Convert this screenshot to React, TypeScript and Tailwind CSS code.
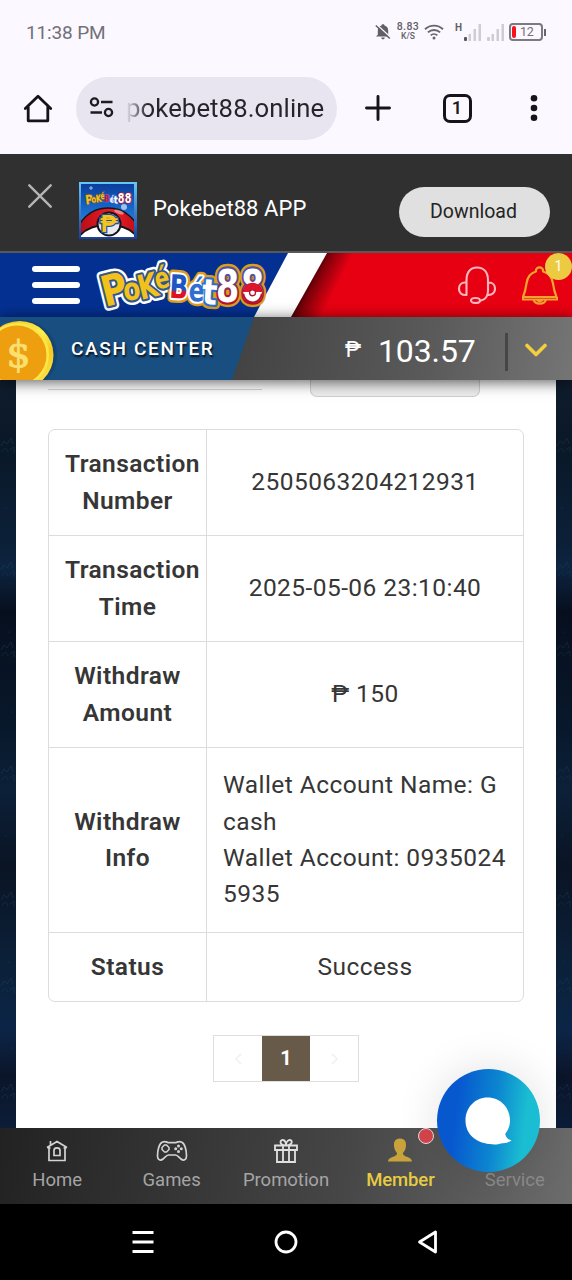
import type { ReactNode } from "react";

type Glyph = {
  ch: string;
  x: number;
  y: number;
  size: number;
  width: number;
  rot: number;
  fill: string;
  edge: string;
  halo: string;
  rim: string;
};

const glyphs: Glyph[] = [
  { ch: "P", x: 314, y: 181, size: 128, width: 78, rot: -14, fill: "#f2c21b", edge: "#35568a", halo: "#35568a", rim: "#ffffff" },
  { ch: "o", x: 372, y: 162, size: 94, width: 52, rot: -6, fill: "#f2c21b", edge: "#35568a", halo: "#35568a", rim: "#ffffff" },
  { ch: "K", x: 422, y: 160, size: 102, width: 60, rot: -14, fill: "#f2c21b", edge: "#35568a", halo: "#35568a", rim: "#ffffff" },
  { ch: "é", x: 470, y: 128, size: 88, width: 44, rot: -12, fill: "#f2c21b", edge: "#35568a", halo: "#35568a", rim: "#ffffff" },
  { ch: "B", x: 507, y: 153, size: 98, width: 56, rot: 3, fill: "url(#bFill)", edge: "#ffffff", halo: "#ffffff", rim: "#dd9d1e" },
  { ch: "é", x: 565, y: 162, size: 94, width: 48, rot: 3, fill: "#2f6fd0", edge: "#ffffff", halo: "#ffffff", rim: "#dd9d1e" },
  { ch: "t", x: 604, y: 171, size: 106, width: 46, rot: 4, fill: "#ffffff", edge: "#2f6fd0", halo: "#2f6fd0", rim: "#dd9d1e" },
  { ch: "8", x: 649, y: 166, size: 134, width: 70, rot: 0, fill: "#ffffff", edge: "url(#eightEdge)", halo: "url(#eightEdge)", rim: "#dd9d1e" },
  { ch: "8", x: 724, y: 166, size: 134, width: 70, rot: 0, fill: "#ffffff", edge: "url(#eightEdge)", halo: "url(#eightEdge)", rim: "#dd9d1e" },
];

function Wordmark({ className }: { className: string }) {
  const layer = (pick: (g: Glyph) => { fill: string; stroke: string; width: number }, key: string) =>
    glyphs.map((g, i) => {
      const p = pick(g);
      return (
        <text
          key={key + i}
          x={g.x}
          y={g.y}
          fontSize={g.size}
          transform={`rotate(${g.rot} ${g.x} ${g.y})`}
          fill={p.fill}
          stroke={p.stroke}
          strokeWidth={p.width}
          strokeLinejoin="round"
          paintOrder="stroke"
          textLength={g.width}
          lengthAdjust="spacingAndGlyphs"
        >
          {g.ch}
        </text>
      );
    });
  return (
    <svg viewBox="288 36 516 160" className={className} fontFamily="'DejaVu Sans Condensed','DejaVu Sans',sans-serif" fontWeight="700" overflow="visible">
      <defs>
        <linearGradient id="bFill" x1="0" y1="0" x2="0" y2="1">
          <stop offset="0.6" stopColor="#1f55c4" />
          <stop offset="0.6" stopColor="#e01222" />
        </linearGradient>
        <linearGradient id="eightEdge" x1="0" y1="0" x2="0" y2="1">
          <stop offset="0.3" stopColor="#54509c" />
          <stop offset="0.7" stopColor="#b3142c" />
        </linearGradient>
      </defs>
      {layer((g) => ({ fill: g.rim, stroke: g.rim, width: 28 }), "r")}
      {layer((g) => ({ fill: g.halo, stroke: g.halo, width: 13 }), "h")}
      {layer((g) => ({ fill: g.fill, stroke: g.edge, width: 7 }), "f")}
      <g>
        <circle cx="759" cy="139" r="28" fill="#fff" stroke="#b3142c" strokeWidth="6" />
        <path d="M731 137a28 28 0 0 1 56 0z" fill="#e0142b" />
        <path d="M731 138h56" stroke="#fff" strokeWidth="5" />
        <circle cx="759" cy="138" r="9" fill="#fff" stroke="#b3142c" strokeWidth="4" />
      </g>
    </svg>
  );
}

function AppIcon() {
  return (
    <svg viewBox="0 0 58 57" className="h-[57px] w-[58px] shrink-0">
      <defs>
        <linearGradient id="appSky" x1="0" y1="0" x2="0" y2="1">
          <stop offset="0" stopColor="#0b3a98" />
          <stop offset="0.4" stopColor="#1460c4" />
          <stop offset="1" stopColor="#3aa0ea" />
        </linearGradient>
        <linearGradient id="appFrame" x1="0" y1="0" x2="0" y2="1">
          <stop offset="0" stopColor="#66c8f4" />
          <stop offset="1" stopColor="#173f9e" />
        </linearGradient>
        <linearGradient id="appBall" x1="0" y1="0" x2="1" y2="0">
          <stop offset="0" stopColor="#b40c14" />
          <stop offset="0.6" stopColor="#ee1e26" />
          <stop offset="1" stopColor="#b80c16" />
        </linearGradient>
        <clipPath id="appClip">
          <rect x="2" y="2" width="53" height="53" />
        </clipPath>
      </defs>
      <rect width="58" height="57" fill="url(#appFrame)" />
      <g clipPath="url(#appClip)">
        <rect width="58" height="57" fill="url(#appSky)" />
        <circle cx="45" cy="25" r="3" fill="#fff" opacity="0.6" />
        <path d="M12 4v4M10 6h4" stroke="#b9dcff" strokeWidth="0.8" />
        <ellipse cx="29" cy="54" rx="31" ry="28" fill="url(#appBall)" stroke="#14141c" strokeWidth="1.4" />
        <path d="M-2 58C4 47 14 43 29 43s25 4 31 15z" fill="#fff" stroke="#14141c" strokeWidth="1.8" />
        <circle cx="30" cy="42" r="11.5" fill="#e9e9ef" stroke="#14141c" strokeWidth="2" />
        <ellipse cx="40" cy="30" rx="5" ry="1.8" fill="#fff" opacity="0.45" transform="rotate(20 40 30)" />
        <text x="30" y="50" textAnchor="middle" fontFamily="Roboto,sans-serif" fontWeight="700" fontSize="24" fill="#f5c51d" stroke="#24509c" strokeWidth="2.600" paintOrder="stroke">
          ₱
        </text>
      </g>
      <svg x="5" y="8" width="49" height="16" viewBox="288 36 516 160" preserveAspectRatio="none" overflow="visible" fontFamily="'DejaVu Sans Condensed','DejaVu Sans',sans-serif" fontWeight="700">
        {glyphs.map((g, i) => (
          <text
            key={i}
            x={g.x - 6}
            y={g.y}
            fontSize={g.size}
            textLength={g.width}
            lengthAdjust="spacingAndGlyphs"
            fill={i < 4 ? "#f2c21b" : i === 4 ? "#e01222" : "#ffffff"}
            stroke={i < 4 ? "#6a5a48" : i > 6 ? "#b3142c" : "#2f6fd0"}
            strokeWidth="16"
            paintOrder="stroke"
            transform={`rotate(${g.rot / 2} ${g.x} ${g.y})`}
          >
            {g.ch}
          </text>
        ))}
      </svg>
    </svg>
  );
}

function StatusBar() {
  return (
    <div className="flex h-16 items-center justify-between pl-[26px] pr-[25px] text-[#737078]">
      <span className="text-[19px] leading-none tracking-[-0.150px]">11:38 PM</span>
      <div className="flex items-center">
        <svg viewBox="0 0 16 18" className="h-[18px] w-4" fill="#625f66">
          <path d="M8 1.200c.9 0 1.500.5 1.500 1.300 2.400.6 3.700 2.400 3.700 5v4.300L15 13.500H1l1.800-1.700V7.500c0-2.600 1.300-4.400 3.700-5C6.500 1.700 7.100 1.200 8 1.200zM6.200 14.600h3.600a1.800 1.800 0 0 1-3.600 0z" />
          <path d="M1.900 1.700l14 13" stroke="#fbf8ff" strokeWidth="1.500" />
          <path d="M.8 2.500l14 13" stroke="#625f66" strokeWidth="1.500" />
        </svg>
        <div className="ml-[5px] mb-[2px] flex w-[24px] flex-col items-center text-[#625f66]">
          <span className="text-[10.5px] font-medium leading-[10px] tracking-[0.400px]">8.83</span>
          <span className="text-[8.500px] font-medium leading-[9px]">K/S</span>
        </div>
        <svg viewBox="0 0 20 16" className="ml-[4px] h-4 w-5" fill="none" stroke="#68656c" strokeWidth="1.900">
          <path d="M1 5.200a13 13 0 0 1 18 0M3.900 8.400a8.800 8.800 0 0 1 12.200 0M6.700 11.400a4.800 4.800 0 0 1 6.600 0" />
          <circle cx="10" cy="14" r="1.500" fill="#68656c" stroke="none" />
        </svg>
        <span className="ml-[11px] mb-[8px] text-[10px] font-bold leading-none text-[#625f66]">H</span>
        <svg viewBox="0 0 40 17" className="ml-[2px] h-[17px] w-10" fill="#cfccd3">
          <rect x="0" y="13" width="3" height="4" rx="1" fill="#57545b" />
          <rect x="4.500" y="10" width="2.500" height="7" />
          <rect x="9.500" y="5" width="2.500" height="12" />
          <rect x="14.500" y="0" width="2.500" height="17" />
          <rect x="23" y="13" width="3" height="4" rx="1" />
          <rect x="27.500" y="10" width="2.500" height="7" />
          <rect x="32.500" y="5" width="2.500" height="12" />
          <rect x="37.500" y="0" width="2.500" height="17" />
        </svg>
        <div className="ml-[5px] flex h-[18px] w-[34px] items-center gap-[4px] rounded-[4px] border-2 border-[#7c7980] pl-[1px]">
          <span className="h-[12px] w-[4px] rounded-sm bg-[#f3121e]" />
          <span className="text-[12.500px] leading-none tracking-[-0.200px]">12</span>
        </div>
        <span className="ml-px mr-px h-[7px] w-[2px] bg-[#68656c]" />
      </div>
    </div>
  );
}

function BrowserBar() {
  return (
    <div className="flex h-[90px] items-center text-[#1c1b20]">
      <svg viewBox="0 0 30 30" className="ml-[23px] h-[30px] w-[30px]" fill="none" stroke="#151419" strokeWidth="2.800" strokeLinejoin="round" strokeLinecap="round">
        <path d="M2.300 14.600L15 2.200l12.700 12.400M5.200 12.500v14.300h19.600V12.500" />
      </svg>
      <div className="ml-[23px] -mt-[2px] flex h-[63px] w-[261px] items-center rounded-full bg-[#e8e5f1] pl-[13px]">
        <svg viewBox="0 0 26 22" className="h-[22px] w-[26px]" fill="none" stroke="#1c1b20" strokeWidth="2.300">
          <circle cx="5.500" cy="5" r="3.600" />
          <path d="M12 5h11.500M1.500 15.500h11.500" />
          <circle cx="19.500" cy="15.500" r="3.600" />
        </svg>
        <span className="ml-[11px] bg-linear-to-r from-[#e8e5f1] from-[0px] to-[#25242b] to-[22px] bg-clip-text text-[25.700px] leading-[34px] text-transparent tracking-[0.100px]">
          pokebet88.online
        </span>
      </div>
      <svg viewBox="0 0 26 26" className="-mt-[2px] ml-[28px] h-[26px] w-[26px]" stroke="#151419" strokeWidth="2.900" strokeLinecap="round">
        <path d="M13 1.500v23M1.500 13h23" />
      </svg>
      <div className="-mt-[2px] ml-[52px] flex h-[29px] w-[29px] items-center justify-center rounded-[7px] border-3 border-[#151419] pr-px text-[18px] font-semibold leading-none">
        1
      </div>
      <svg viewBox="0 0 8 28" className="-mt-[2px] ml-[58px] h-[28px] w-[8px]" fill="#151419">
        <circle cx="4" cy="4.200" r="3.300" />
        <circle cx="4" cy="14" r="3.300" />
        <circle cx="4" cy="23.800" r="3.300" />
      </svg>
    </div>
  );
}

function DownloadBanner() {
  return (
    <div className="flex h-[99px] items-start border-b-2 border-[#585858] bg-[#303030]">
      <svg viewBox="0 0 24 24" className="ml-7 mt-[30px] h-6 w-6" stroke="#b4b4b4" strokeWidth="2.400" strokeLinecap="round">
        <path d="M1.300 1.300l21.400 21.400M22.700 1.300L1.300 22.700" />
      </svg>
      <div className="ml-[27px] mt-[28px] flex">
        <AppIcon />
      </div>
      <span className="ml-[16px] mt-[40px] w-[246px] text-[22px] leading-[30px] tracking-[0.080px] text-white">Pokebet88 APP</span>
      <button className="mt-[33px] h-[50px] w-[151px] shrink-0 rounded-full bg-[#e0e0e0] pr-[2px] text-[19.500px] tracking-[0.030px] text-[#242424]">
        Download
      </button>
    </div>
  );
}

function BrandHeader() {
  return (
    <div className="relative flex h-16 items-center overflow-hidden bg-[#e70012]">
      <div className="absolute inset-y-0 left-[250px] w-[130px] bg-linear-[117deg] from-black from-38% via-[#82000a] via-50% to-[#e70012] to-64%" />
      <div className="absolute inset-y-0 left-0 w-[327px] bg-white [clip-path:polygon(0_0,100%_0,291px_100%,0_100%)]" />
      <div className="absolute inset-y-0 left-0 w-[288px] bg-[#043091] [clip-path:polygon(0_0,100%_0,254px_100%,0_100%)]" />
      <div className="relative ml-8 flex w-[48px] flex-col gap-[10px]">
        <span className="h-[6px] rounded-full bg-white" />
        <span className="h-[6px] rounded-full bg-white" />
        <span className="h-[6px] rounded-full bg-white" />
      </div>
      <Wordmark className="relative ml-4 h-[53px] w-[172px]" />
      <svg viewBox="0 0 38 38" className="relative ml-[190px] h-[38px] w-[38px]" fill="none" stroke="#ffb6c0" strokeWidth="2.100" strokeLinejoin="round" strokeLinecap="round">
        <path d="M8.500 29V14.500C8.500 6.500 12 1.500 19 1.500s11 5 11 13V25c0 4.500-2.500 8.500-7 9.500M8.500 29C3.500 29.500 1 26.500 1 22.800c0-3.800 2.500-6.300 6-6.300M31 16.500c3.500 0 6 2.500 6 6.300 0 3.500-2.500 6.500-7 6.200" />
        <ellipse cx="17.500" cy="34.500" rx="4.500" ry="2.500" />
      </svg>
      <svg viewBox="0 0 36 40" className="relative ml-[26px] h-[40px] w-[36px]" fill="none" stroke="#f2a22f" strokeWidth="2.200" strokeLinejoin="round">
        <path d="M14 6.500C13 1 22 1 21 6.500c6 1.500 9 5.500 10 12 .8 6 1.500 8.500 3.500 13.500H1c2-5 2.700-7.500 3.500-13.500.9-6.500 3.500-10.500 9.500-12zM1 32l-.2 2.500h34.400L35 32M11.500 34.500c1.500 5.500 11 5.500 12.500 0M15 34.800c1 1.800 4.500 1.800 5.500 0" />
      </svg>
      <span className="absolute right-0 top-0 flex h-[27px] w-[27px] items-center justify-center rounded-full bg-[#ecca42] text-[14px] text-white">1</span>
    </div>
  );
}

function Coin() {
  return (
    <svg viewBox="0 0 60 63" className="relative h-[63px] w-[60px]">
      <defs>
        <linearGradient id="coinRim" x1="0" y1="0" x2="1" y2="1">
          <stop offset="0" stopColor="#e7ae16" />
          <stop offset="0.500" stopColor="#fff04a" />
          <stop offset="0.700" stopColor="#f8c81e" />
          <stop offset="1" stopColor="#fff35c" />
        </linearGradient>
      </defs>
      <circle cx="22" cy="38" r="35" fill="#0b2a4a" opacity="0.250" />
      <circle cx="19.500" cy="38" r="34" fill="url(#coinRim)" />
      <circle cx="17" cy="38" r="32" fill="#fbe64a" />
      <circle cx="17" cy="38" r="29.500" fill="#ee9f10" />
      <text x="18.500" y="50" textAnchor="middle" fontFamily="'DejaVu Serif',serif" fontSize="38" fill="#f9e070" stroke="#f9e070" strokeWidth="0.800">$</text>
    </svg>
  );
}

function CashBar() {
  return (
    <div className="relative z-10 flex h-[63px] items-center bg-linear-[100deg] from-[#424242] from-40% via-[#5a5a5a] via-75% to-[#757575] shadow-[0_2px_14px_rgba(0,0,0,0.650)]">
      <div className="absolute inset-y-0 left-0 w-[254px] bg-[#184e80] [clip-path:polygon(0_0,100%_0,232px_100%,0_100%)]" />
      <Coin />
      <span className="relative ml-[11px] mt-px w-[274px] whitespace-nowrap text-[19px] font-medium tracking-[1.650px] text-white [text-shadow:1px_2px_2px_rgba(0,0,0,0.800)]">CASH CENTER</span>
      <span className="mt-[3px] w-[33px] text-[22px] leading-none text-white">₱</span>
      <span className="mt-[4px] w-[127px] text-[32px] leading-none text-white tracking-[-0.120px]">103.57</span>
      <span className="mt-[6px] h-[38px] w-[3px] bg-[#464646]" />
      <svg viewBox="0 0 24 14" className="ml-4 mt-[2px] h-[14px] w-6" fill="none" stroke="#f2cf3f" strokeWidth="3.600" strokeLinecap="round" strokeLinejoin="round">
        <path d="M3 2.500l9 9 9-9" />
      </svg>
    </div>
  );
}

function Row({ label, height, children }: { label: ReactNode; height: string; children: ReactNode }) {
  return (
    <div className={`grid grid-cols-[158px_1fr] border-b border-[#dcdcdc] last:border-b-0 ${height}`}>
      <div className="flex items-center justify-center border-r border-[#dcdcdc] text-center font-semibold">{label}</div>
      <div className="flex items-center justify-center">{children}</div>
    </div>
  );
}

function Transactions() {
  return (
    <div className="mx-8 h-[573px] w-[476px] rounded-[7px] border border-[#dcdcdc] text-[24.500px] leading-[36.300px] tracking-[0.440px] text-[#363636]">
      <Row height="h-[106px]" label={<span className="w-[125px]">Transaction<br />Number</span>}>2505063204212931</Row>
      <Row height="h-[106px]" label={<span className="w-[125px]">Transaction<br />Time</span>}>2025-05-06 23:10:40</Row>
      <Row height="h-[106px]" label={<span>Withdraw<br />Amount</span>}>₱ 150</Row>
      <Row height="h-[185px]" label={<span>Withdraw<br />Info</span>}>
        <p className="w-full pl-4">
          Wallet Account Name: G<br />cash<br />Wallet Account: 0935024<br />5935
        </p>
      </Row>
      <Row height="h-[68px]" label="Status">Success</Row>
    </div>
  );
}

function Pager() {
  return (
    <div className="mx-auto mt-[33px] flex h-[47px] w-[146px] border border-[#dedede]">
      <span className="flex w-12 items-center justify-center">
        <svg viewBox="0 0 8 14" className="h-[12px] w-[7px]" fill="none" stroke="#f1f1f1" strokeWidth="1.800"><path d="M7 1L1 7l6 6" /></svg>
      </span>
      <span className="flex w-12 items-center justify-center bg-[#685a48] pb-[2px] text-[20px] font-bold text-white">1</span>
      <span className="flex w-12 items-center justify-center">
        <svg viewBox="0 0 8 14" className="h-[12px] w-[7px]" fill="none" stroke="#f1f1f1" strokeWidth="1.800"><path d="M1 1l6 6-6 6" /></svg>
      </span>
    </div>
  );
}

const motifRows = [66, 190, 270, 394, 520, 606, 712];

function NightEdge({ id }: { id: string }) {
  return (
    <svg viewBox="0 0 16 748" className="h-[748px] w-4" fill="none" stroke="#1d4560" strokeWidth="0.900" opacity="0.800">
      {motifRows.map((y, i) => (
        <g key={id + y} opacity={id === "left" ? 0.6 : 0.5}>
          <path d={`M1 ${y}l3-5 3 3 4-6 2 6M2 ${y + 6}c2-5 5-4 6 0M10 ${y + 4}l4-3v6`} />
          <circle cx={6 + (i % 3) * 3} cy={y + 62} r="0.500" fill="#53697d" stroke="none" />
        </g>
      ))}
    </svg>
  );
}

const tabs: { name: string; color: string; icon: ReactNode }[] = [
  {
    name: "Home",
    color: "text-[#a5a5a5]",
    icon: (
      <svg viewBox="0 0 22 22" className="h-[22px] w-[22px]" fill="none" stroke="#d4d4d4" strokeWidth="1.700">
        <path d="M1 7.500L11 1.500l10 6M3 7v13.500h16V7M4.500 5V1M1.500 8h3M17.500 8h3M8 15.500v-5c0-3.500 6-3.500 6 0v5z" />
      </svg>
    ),
  },
  {
    name: "Games",
    color: "text-[#a5a5a5]",
    icon: (
      <svg viewBox="0 0 32 22" className="h-[22px] w-8" fill="none" stroke="#d4d4d4" strokeWidth="1.700">
        <path d="M6.500 2c3-1.500 4.500.7 6.500.7h6c2 0 3.500-2.200 6.500-.7 3.500 1.500 5 8.500 5 14 0 4-3 5-5.500 3-2-1.600-3.500-4-5.500-4h-7c-2 0-3.500 2.400-5.500 4C4.500 21 1.500 20 1.500 16c0-5.500 1.500-12.500 5-14z" />
        <path d="M8.500 5h2l2.500 2.500v2L10.500 12h-2L6 9.500v-2z" strokeWidth="1.500" />
        <g fill="#d4d4d4" stroke="none"><circle cx="22.500" cy="6" r="1.500" /><circle cx="22.500" cy="11.500" r="1.500" /><circle cx="19.700" cy="8.700" r="1.500" /><circle cx="25.300" cy="8.700" r="1.500" /></g>
      </svg>
    ),
  },
  {
    name: "Promotion",
    color: "text-[#a5a5a5]",
    icon: (
      <svg viewBox="0 0 24 24" className="h-[24px] w-6" fill="none" stroke="#e0e0e0" strokeWidth="1.800">
        <path d="M1 6.500h22v4.500H1zM3 11v12h18V11M9 6.500V23M15 6.500V23M11.500 6.500C4 5.500 6.500.5 9 1c2 .3 3 3 3 5.500C12 4 13.500 1.300 15.500 1c2.500-.5 4.500 4.500-3 5.500" />
      </svg>
    ),
  },
  {
    name: "Member",
    color: "text-[#e6cb43]",
    icon: (
      <svg viewBox="0 0 24 24" className="-mt-px h-6 w-6" fill="#c8a33b">
        <path d="M12 .5c4.500 0 6.300 3 6 7.300-.2 3-1.500 5.700-3 7.200-.3 2.500 2 3 5 4.200 2.500 1 3.700 1.800 4 4.300H0c.3-2.500 1.500-3.300 4-4.300 3-1.200 5.300-1.700 5-4.200-1.500-1.500-2.800-4.200-3-7.200C5.700 3.500 7.500.5 12 .5z" />
      </svg>
    ),
  },
  { name: "Service", color: "text-[#8b8b8b]", icon: <span className="h-[22px]" /> },
];

function TabBar() {
  return (
    <div className="relative grid h-[76px] grid-cols-5 bg-linear-[100deg] from-[#222] via-[#464646] via-60% to-[#6c6c6c]">
      {tabs.map((t) => (
        <div key={t.name} className={`flex flex-col items-center pt-[10px] ${t.color}`}>
          <div className="flex h-[25px] items-center">{t.icon}</div>
          <span className={`mt-[5px] text-[18.500px] leading-6 ${t.name === "Member" ? "font-medium tracking-[-0.100px]" : "tracking-[-0.020px]"}`}>{t.name}</span>
        </div>
      ))}
      <span className="absolute left-[418px] top-0 h-4 w-4 rounded-full border-[1.500px] border-[#eadede] bg-[#d7444c]" />
      <div className="absolute left-[437px] top-[-59px] h-[103px] w-[103px] rounded-full bg-linear-[97deg] from-[#0757cf] from-20% via-[#0c86d0] via-55% to-[#1bbdd2] to-82% shadow-[0_0_45px_rgba(0,0,0,0.120)]">
        <svg viewBox="0 0 103 103" className="h-full w-full" fill="#fff">
          <path d="M50.500 28.500c13 0 22.500 10 22.500 23 0 5.500-1.800 9.500-4.800 13.500.8 3.500 2.800 5.500 6.300 6.200-2.500 2.300-6 3.300-9.500 3-4.500 1.500-8.500 1.500-12.500.8C38 73.500 28.500 64.500 28.500 51.500c0-13 9.500-23 22-23z" />
        </svg>
      </div>
    </div>
  );
}

export default function App() {
  return (
    <div className="flex h-[1280px] w-[572px] flex-col overflow-hidden bg-[#fbf8ff] font-['Roboto','Noto_Sans',sans-serif]">
      <StatusBar />
      <BrowserBar />
      <DownloadBanner />
      <BrandHeader />
      <CashBar />
      <main className="flex h-[748px] justify-between bg-[linear-gradient(180deg,#101d2e_0%,#0a1827_8%,#0b2038_22%,#0d2440_25%,#070f1e_31%,#08172a_45%,#0c2038_55%,#0a1424_65%,#0b2039_78%,#0c2547_87%,#0b1529_93%,#0c1d38_100%)]">
        <NightEdge id="left" />
        <div className="w-[540px] bg-white">
          <div className="flex h-[49px] items-start pl-8">
            <div className="h-[10px] w-[214px] border-b border-[#d5d5d5]" />
            <div className="ml-[48px] h-[17px] w-[170px] rounded-b-[7px] border border-t-0 border-[#cecece] bg-[#ededed]" />
          </div>
          <Transactions />
          <Pager />
        </div>
        <NightEdge id="right" />
      </main>
      <TabBar />
      <div className="grid h-[76px] grid-cols-[108px_1fr_1fr_1fr_108px] items-center justify-items-center bg-black">
        <svg viewBox="0 0 22 22" className="col-start-2 -ml-px h-[22px] w-[22px] -translate-x-[24px]" stroke="#fff" strokeWidth="2.800"><path d="M.5 1.500h21M.5 11h21M.5 20.500h21" /></svg>
        <svg viewBox="0 0 24 24" className="h-6 w-6" fill="none" stroke="#fff" strokeWidth="2.800"><circle cx="12" cy="12" r="10" /></svg>
        <svg viewBox="0 0 22 24" className="h-6 w-[22px] translate-x-[23px]" fill="none" stroke="#fff" strokeWidth="2.800" strokeLinejoin="round"><path d="M18.500 2v20L2.500 12z" /></svg>
      </div>
    </div>
  );
}
